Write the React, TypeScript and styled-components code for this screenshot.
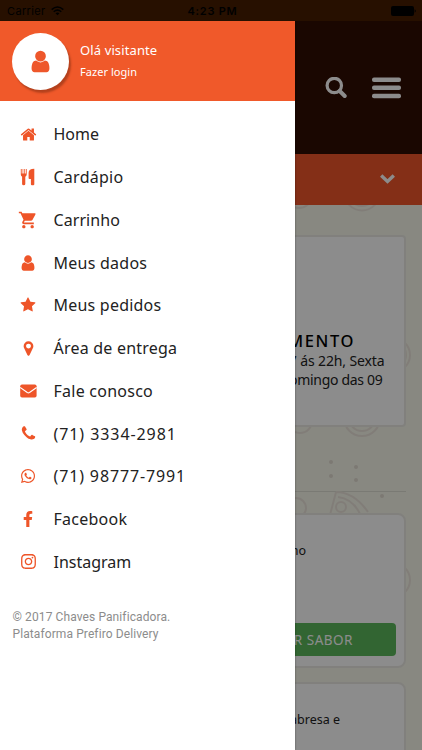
import React from 'react';
import styled, { createGlobalStyle } from 'styled-components';
import { MdShoppingCart } from 'react-icons/md';
import { FaWhatsapp, FaInstagram, FaFacebookF } from 'react-icons/fa';

const GlobalStyle = createGlobalStyle`
  * { box-sizing: border-box; }
  body { margin: 0; }
`;

const Screen = styled.div`
  position: relative;
  width: 422px;
  height: 750px;
  overflow: hidden;
  display: flex;
  flex-direction: column;
  background: #f7f8ec;
  font-family: 'Noto Sans', sans-serif;
`;

const StatusBar = styled.div`
  position: relative;
  z-index: 3;
  flex: none;
  height: 21px;
  padding: 1px 6px 0 7px;
  display: grid;
  grid-template-columns: 1fr auto 1fr;
  align-items: center;
  background: #271000;
  color: #000;
  font: 400 11px/20px Inter, sans-serif;
`;

const Carrier = styled.div`
  display: flex;
  align-items: center;
  gap: 5px;
  letter-spacing: 0.35px;
`;

const Clock = styled.div`
  padding-left: 2px;
  font-weight: 600;
  letter-spacing: 0.75px;
`;

const BatteryIcon = styled.svg`
  justify-self: end;
`;

const Header = styled.header`
  flex: none;
  height: 133px;
  padding: 0 21.5px 0 0;
  display: flex;
  justify-content: flex-end;
  align-items: center;
  gap: 25px;
  background: #310d02;
  color: #fff;
`;

const CategoryBar = styled.div`
  flex: none;
  height: 51px;
  padding: 0 26px 2px 0;
  display: flex;
  justify-content: flex-end;
  align-items: center;
  background: #f0572a;
`;

const Content = styled.main`
  position: relative;
  flex: 1;
  padding: 30px 16px 0;
  display: flex;
  flex-direction: column;
`;

const Doodles = styled.svg`
  position: absolute;
  left: 0;
  top: 0;
`;

const Card = styled.section<{ $height: number; $radius: number; $gap?: number }>`
  position: relative;
  flex: none;
  height: ${p => p.$height}px;
  margin-top: ${p => p.$gap ?? 0}px;
  border: 2px solid #ebeae3;
  border-radius: ${p => p.$radius}px;
  background: #fff;
  color: #222;
  display: flex;
  flex-direction: column;
  align-items: flex-end;
  text-align: right;
  white-space: nowrap;
`;

const HoursTitle = styled.h2`
  margin: 92px 49px 0 0;
  font-size: 16.5px;
  line-height: 23px;
  font-weight: 500;
  letter-spacing: 1.6px;
  color: #000;
`;

const HoursLine = styled.div<{ $inset: number; $spacing: number }>`
  margin-right: ${p => p.$inset}px;
  font-size: 14px;
  line-height: 18.5px;
  letter-spacing: ${p => p.$spacing}px;
`;

const Divider = styled.hr`
  flex: none;
  width: 100%;
  height: 1px;
  margin: 64px 0 21px;
  border: 0;
  background: #dedfd4;
`;

const ProductName = styled.div<{ $top: number; $inset: number }>`
  margin: ${p => p.$top}px ${p => p.$inset}px 0 0;
  font-size: 12.5px;
  line-height: 18px;
`;

const FlavorButton = styled.button`
  width: 370px;
  height: 33px;
  margin: auto 8px 10px;
  padding: 0 43px 0 0;
  border: 0;
  border-radius: 4px;
  background: #5cb85c;
  color: #fff;
  font: 400 13.5px 'Noto Sans', sans-serif;
  letter-spacing: 0.5px;
  text-align: right;
`;

const Backdrop = styled.div`
  position: absolute;
  inset: 21px 0 0;
  z-index: 1;
  background: rgba(0, 0, 0, 0.45);
`;

const Drawer = styled.aside`
  position: absolute;
  top: 21px;
  left: 0;
  bottom: 0;
  z-index: 2;
  width: 295px;
  background: #fff;
  box-shadow: 0 0 2px rgba(0, 0, 0, 0.4);
`;

const Profile = styled.div`
  height: 80px;
  padding: 0 12px;
  display: flex;
  align-items: center;
  gap: 11px;
  background: #f0592a;
  color: #fff;
`;

const Avatar = styled.div`
  width: 57px;
  height: 57px;
  border-radius: 50%;
  display: flex;
  align-items: center;
  justify-content: center;
  background: #fff;
  color: #ee572b;
  box-shadow: 2px 3px 2px rgba(90, 30, 10, 0.4);
`;

const Greeting = styled.div`
  font-size: 13px;
  line-height: 22px;
  letter-spacing: 0.12px;
`;

const LoginLink = styled.div`
  font-size: 11px;
  line-height: 22px;
  letter-spacing: 0.05px;
`;

const Menu = styled.nav`
  padding-top: 12px;
`;

const MenuItem = styled.div<{ $spacing: number }>`
  height: 42.75px;
  padding-left: 18px;
  display: flex;
  align-items: center;
  gap: 15.5px;
  color: #222;
  font-size: 16px;
  letter-spacing: ${p => p.$spacing}px;
`;

const IconSlot = styled.span`
  width: 20px;
  height: 20px;
  display: flex;
  align-items: center;
  justify-content: center;
  color: #ee5529;
`;

const Footer = styled.footer`
  padding: 25.5px 12.5px 0;
  font: 400 12px/17.5px Roboto, sans-serif;
  letter-spacing: 0.1px;
  color: #8c8c8c;
`;

const USER = 'M1536 1399q0 109-62.5 187t-150.5 78h-854q-88 0-150.5-78t-62.5-187q0-85 8.5-160.5t31.5-152 58.5-131 94-89 134.5-34.5q131 128 313 128t313-128q76 0 134.5 34.5t94 89 58.5 131 31.5 152 8.5 160.5zm-256-887q0 159-112.5 271.5t-271.5 112.5-271.5-112.5-112.5-271.5 112.5-271.5 271.5-112.5 271.5 112.5 112.5 271.5z';
const HOME = 'M1472 992v480q0 26-19 45t-45 19h-384v-384h-256v384h-384q-26 0-45-19t-19-45v-480q0-1 .5-3t.5-3l575-474 575 474q1 2 1 6zm223-69l-62 74q-8 9-21 11h-3q-13 0-21-7l-692-577-692 577q-12 8-24 7-13-2-21-11l-62-74q-8-10-7-23.5t11-21.5l719-599q32-26 76-26t76 26l244 204v-195q0-14 9-23t23-9h192q14 0 23 9t9 23v408l219 182q10 8 11 21.5t-7 23.5z';
const STAR = 'M1728 647q0 22-26 48l-363 354 86 500q1 7 1 20 0 21-10.5 35.5t-30.5 14.5q-19 0-40-12l-449-236-449 236q-22 12-40 12-21 0-31.5-14.5t-10.5-35.5q0-6 2-20l86-500-364-354q-25-27-25-48 0-37 56-46l502-73 225-455q19-41 49-41t49 41l225 455 502 73q56 9 56 46z';
const PIN = 'M1152 640q0-106-75-181t-181-75-181 75-75 181 75 181 181 75 181-75 75-181zm256 0q0 109-33 179l-364 774q-16 33-47.5 52t-67.5 19-67.5-19-46.5-52l-365-774q-33-70-33-179 0-212 150-362t362-150 362 150 150 362z';
const PHONE = 'M1600 1240q0 27-10 70.5t-21 68.5q-21 50-122 106-94 51-186 51-27 0-53-3.5t-57.5-12.5-47-14.5-55.5-20.5-49-18q-98-35-175-83-127-79-264-216t-216-264q-48-77-83-175-3-9-18-49t-20.5-55.5-14.5-47-12.5-57.5-3.5-53q0-92 51-186 56-101 106-122 25-11 68.5-21t70.5-10q14 0 21 3 18 6 53 76 11 19 30 54t35 63.5 31 53.5q3 4 17.5 25t21.5 35.5 7 28.5q0 20-28.5 50t-62 55-62 53-28.5 46q0 9 5 22.5t8.5 20.5 14 24 11.5 19q76 137 174 235t235 174q2 1 19 11.5t24 14 20.5 8.5 22.5 5q18 0 46-28.5t53-62 55-62 50-28.5q14 0 28.5 7t35.5 21.5 25 17.5q25 15 53.5 31t63.5 35 54 30q70 35 76 53 3 7 3 21z';

const Glyph = ({ d, size }: { d: string; size: number }) => (
  <svg width={size} height={size} viewBox="0 0 1792 1792" fill="currentColor"><path d={d} /></svg>
);

const Cutlery = () => (
  <svg width="16" height="18" viewBox="0 0 16 18" fill="currentColor">
    <path d="M.8 1v5.500Q.8 8 2.100 8.700V16q0 1.300 1.600 1.300T5.300 16V8.700Q6.700 8 6.700 6.500V1H5.800V5.600H4.900V1H4.200V5.600H3.300V1H2.600V5.600H1.700V1z" />
    <path d="M14.300 .8Q8.600 1 8.600 4.700V10q0 .9 .9 .9h1.400V16.300q0 1 1 1h1.300q1.100 0 1.100-1V.8z" />
  </svg>
);

const Mail = () => (
  <svg width="17" height="14" viewBox="0 0 17 14">
    <rect x=".2" y=".5" width="16.400" height="13" rx="1.800" fill="currentColor" />
    <path d="M.2 3.500 7.300 8.500q1.100.7 2.200 0L16.600 3.500" fill="none" stroke="#fff" strokeWidth="1.100" />
  </svg>
);

const items: { label: string; icon: React.ReactNode; spacing: number }[] = [
  { label: 'Home', icon: <Glyph d={HOME} size={17} />, spacing: 0 },
  { label: 'Cardápio', icon: <Cutlery />, spacing: 0.25 },
  { label: 'Carrinho', icon: <MdShoppingCart size={20} />, spacing: 0.08 },
  { label: 'Meus dados', icon: <Glyph d={USER} size={18} />, spacing: 0.25 },
  { label: 'Meus pedidos', icon: <Glyph d={STAR} size={16} />, spacing: 0.22 },
  { label: 'Área de entrega', icon: <Glyph d={PIN} size={17} />, spacing: 0.22 },
  { label: 'Fale conosco', icon: <Mail />, spacing: 0.25 },
  { label: '(71) 3334-2981', icon: <Glyph d={PHONE} size={17} />, spacing: 0.92 },
  { label: '(71) 98777-7991', icon: <FaWhatsapp size={16} />, spacing: 0.86 },
  { label: 'Facebook', icon: <FaFacebookF size={16} />, spacing: 0.25 },
  { label: 'Instagram', icon: <FaInstagram size={17} />, spacing: 0 },
];

export default function App() {
  return (
    <Screen>
      <GlobalStyle />
      <StatusBar>
        <Carrier>
          Carrier
          <svg width="13" height="10" viewBox="0 0 13 10" fill="none" stroke="#000" strokeWidth="1.500">
            <path d="M.7 3.600Q6.500-1.600 12.300 3.600M2.700 5.700Q6.500 2.500 10.300 5.700" />
            <path d="M6.500 9.300 4.500 7.200q2-1.600 4 0z" fill="#000" stroke="none" />
          </svg>
        </Carrier>
        <Clock>4:23 PM</Clock>
        <BatteryIcon width="25" height="10" viewBox="0 0 25 10">
          <rect x="0" y="0" width="23" height="10" rx="2" />
          <path d="M23.600 3.200q1.200.6 1.200 1.800t-1.200 1.800z" />
        </BatteryIcon>
      </StatusBar>

      <Header>
        <svg width="22" height="22" viewBox="0 0 22 22" fill="none" stroke="#fff" strokeWidth="3.200" strokeLinecap="round">
          <circle cx="9.300" cy="8.500" r="7.200" />
          <path d="m14.700 14 5 5" strokeWidth="4" />
        </svg>
        <svg width="29" height="22" viewBox="0 0 29 22" fill="#fff">
          <rect y=".5" width="29" height="4.500" rx="2" />
          <rect y="8.600" width="29" height="4.500" rx="2" />
          <rect y="16.700" width="29" height="4.500" rx="2" />
        </svg>
      </Header>
      <CategoryBar>
        <svg width="17" height="12" viewBox="0 0 17 12" fill="none" stroke="#fff" strokeWidth="3.400">
          <path d="m2.200 2.500 6.300 6 6.300-6" />
        </svg>
      </CategoryBar>

      <Content>
        <Doodles width="422" height="545" viewBox="0 205 422 545" fill="none" stroke="#ece4db" strokeWidth="2">
          <circle cx="362" cy="193" r="17.500" />
          <circle cx="362" cy="193" r="13" />
          <circle cx="299" cy="195" r="13" />
          <circle cx="393" cy="355" r="17" />
          <circle cx="393" cy="355" r="13" />
          <circle cx="362" cy="418" r="18" />
          <circle cx="362" cy="418" r="13" />
          <circle cx="300" cy="421" r="12" />
          <circle cx="296" cy="508" r="10" />
          <path d="M336 492q18 0 32 20M336 492l-6 23M338 497q15 2 22 17" />
          <circle cx="341" cy="507" r="5" />
          <circle cx="393" cy="580" r="17" />
          <g fill="#e2ddd2" stroke="none">
            <circle cx="331" cy="462" r="2" />
            <circle cx="356" cy="467" r="2" />
            <circle cx="331" cy="476" r="2" />
            <circle cx="356" cy="480" r="2" />
            <circle cx="382" cy="496" r="2" />
          </g>
        </Doodles>
        <Card $height={192} $radius={4}>
          <HoursTitle>FUNCIONAMENTO</HoursTitle>
          <HoursLine $inset={19.5} $spacing={-0.12}>17 ás 22h, Sexta</HoursLine>
          <HoursLine $inset={21.5} $spacing={-0.3}>Domingo das 09</HoursLine>
        </Card>
        <Divider />
        <Card $height={155} $radius={8}>
          <ProductName $top={27} $inset={98}>com molho</ProductName>
          <FlavorButton>SELECIONAR SABOR</FlavorButton>
        </Card>
        <Card $height={155} $radius={8} $gap={14}>
          <ProductName $top={27} $inset={64}>calabresa e</ProductName>
        </Card>
      </Content>

      <Backdrop />
      <Drawer>
        <Profile>
          <Avatar><Glyph d={USER} size={25} /></Avatar>
          <div>
            <Greeting>Olá visitante</Greeting>
            <LoginLink>Fazer login</LoginLink>
          </div>
        </Profile>
        <Menu>
          {items.map(item => (
            <MenuItem key={item.label} $spacing={item.spacing}>
              <IconSlot>{item.icon}</IconSlot>
              {item.label}
            </MenuItem>
          ))}
        </Menu>
        <Footer>
          © 2017 Chaves Panificadora.<br />Plataforma Prefiro Delivery
        </Footer>
      </Drawer>
    </Screen>
  );
}
